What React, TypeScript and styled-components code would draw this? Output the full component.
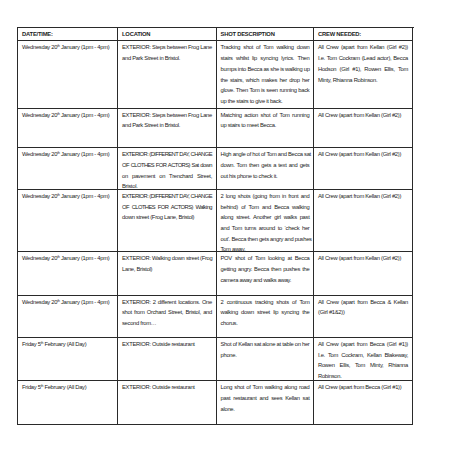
import React from "react";
import styled, { createGlobalStyle } from "styled-components";

const GlobalStyle = createGlobalStyle`
  html, body { margin: 0; padding: 0; background: #ffffff; }
  body {
    font-family: "Liberation Sans", Arial, sans-serif;
    color: #1c1c1c;
  }
`;

const Page = styled.div`
  padding: 27px 0 0 17px;
`;

const Table = styled.div`
  width: 395.5px;
  display: flex;
  flex-direction: column;
  border-top: 1px solid #2a2a2a;
  border-left: 1px solid #2a2a2a;
`;

const Row = styled.div<{ $h: number }>`
  display: grid;
  grid-template-columns: 100px 98.5px 97.5px 98.5px;
  height: ${(p) => p.$h}px;
`;

const Cell = styled.div<{ $head?: boolean }>`
  box-sizing: border-box;
  border-right: 1px solid #2a2a2a;
  border-bottom: 1px solid #2a2a2a;
  padding: 1px 3.5px 0 4px;
  font-size: 5.8px;
  letter-spacing: ${(p) => (p.$head ? "-0.2px" : "-0.28px")};
  line-height: 10.7px;
  font-weight: ${(p) => (p.$head ? 700 : 400)};
  overflow: hidden;
`;

const Line = styled.span<{ $justify: boolean; $tight?: boolean }>`
  display: block;
  white-space: nowrap;
  text-align: ${(p) => (p.$justify ? "justify" : "left")};
  text-align-last: ${(p) => (p.$justify ? "justify" : "left")};
  letter-spacing: ${(p) => (p.$tight ? "-0.56px" : "inherit")};
`;

const Sup = styled.sup`
  font-size: 0.6em;
  line-height: 0;
  vertical-align: 0.6em;
`;

type RowData = {
  h: number;
  date: "wed" | "fri";
  loc: string[];
  shot: string[];
  crew: string[];
};

const rows: RowData[] = [
  {
    h: 67.3,
    date: "wed",
    loc: ["EXTERIOR: Steps between Frog Lane", "and Park Street in Bristol."],
    shot: [
      "Tracking shot of Tom walking down",
      "stairs whilst lip syncing lyrics. Then",
      "bumps into Becca as she is walking up",
      "the stairs, which makes her drop her",
      "glove. Then Tom is seen running back",
      "up the stairs to give it back.",
    ],
    crew: [
      "All Crew (apart from Kellan (Girl #2))",
      "I.e. Tom Cockram (Lead actor), Becca",
      "Hodson (Girl #1), Rowen Ellis, Tom",
      "Minty, Rhianna Robinson.",
    ],
  },
  {
    h: 39.7,
    date: "wed",
    loc: ["EXTERIOR: Steps between Frog Lane", "and Park Street in Bristol."],
    shot: ["Matching action shot of Tom running", "up stairs to meet Becca."],
    crew: ["All Crew (apart from Kellan (Girl #2))"],
  },
  {
    h: 41.6,
    date: "wed",
    loc: [
      "^EXTERIOR: (DIFFERENT DAY, CHANGE",
      "^OF CLOTHES FOR ACTORS) Sat down",
      "on pavement on Trenchard Street,",
      "Bristol.",
    ],
    shot: [
      "High angle of hot of Tom and Becca sat",
      "down. Tom then gets a text and gets",
      "out his phone to check it.",
    ],
    crew: ["All Crew (apart from Kellan (Girl #2))"],
  },
  {
    h: 62.4,
    date: "wed",
    loc: [
      "^EXTERIOR: (DIFFERENT DAY, CHANGE",
      "^OF CLOTHES FOR ACTORS) Walking",
      "down street (Frog Lane, Bristol)",
    ],
    shot: [
      "2 long shots (going from in front and",
      "behind) of Tom and Becca walking",
      "along street. Another girl walks past",
      "and Tom turns around to \u2018check her",
      "out\u2019. Becca then gets angry and pushes",
      "Tom away.",
    ],
    crew: ["All Crew (apart from Kellan (Girl #2))"],
  },
  {
    h: 43.3,
    date: "wed",
    loc: ["EXTERIOR: Walking down street  (Frog", "Lane, Bristol)"],
    shot: [
      "POV shot of Tom looking at Becca",
      "getting angry. Becca then pushes the",
      "camera away and walks away.",
    ],
    crew: ["All Crew (apart from Kellan (Girl #2))"],
  },
  {
    h: 42.3,
    date: "wed",
    loc: [
      "EXTERIOR: 2 different locations. One",
      "shot from Orchard Street, Bristol, and",
      "second from\u2026",
    ],
    shot: [
      "2 continuous tracking shots of Tom",
      "walking down street lip syncing the",
      "chorus.",
    ],
    crew: ["All Crew (apart from Becca & Kellan", "(Girl #1&2))"],
  },
  {
    h: 43.4,
    date: "fri",
    loc: ["EXTERIOR: Outside restaurant"],
    shot: ["Shot of Kellan sat alone at table on her", "phone."],
    crew: [
      "All Crew (apart from Becca (Girl #1))",
      "I.e. Tom Cockram, Kellan Blakeway,",
      "Rowen Ellis, Tom Minty, Rhianna",
      "Robinson.",
    ],
  },
  {
    h: 43.3,
    date: "fri",
    loc: ["EXTERIOR: Outside restaurant"],
    shot: [
      "Long shot of Tom walking along road",
      "past restaurant and sees Kellan sat",
      "alone.",
    ],
    crew: ["All Crew (apart from Becca (Girl #1))"],
  },
];

const Lines: React.FC<{ lines: string[] }> = ({ lines }) => (
  <>
    {lines.map((l, i) => {
      const tight = l.startsWith("^");
      return (
        <Line key={i} $justify={i < lines.length - 1} $tight={tight}>
          {tight ? l.slice(1) : l}
        </Line>
      );
    })}
  </>
);

const DateText: React.FC<{ kind: "wed" | "fri" }> = ({ kind }) =>
  kind === "wed" ? (
    <Line $justify={false}>
      Wednesday 20<Sup>th</Sup> January (1pm - 4pm)
    </Line>
  ) : (
    <Line $justify={false}>
      Friday 5<Sup>th</Sup> February (All Day)
    </Line>
  );

export default function App() {
  return (
    <>
      <GlobalStyle />
      <Page>
        <Table>
          <Row $h={13.4}>
            <Cell $head>DATE/TIME:</Cell>
            <Cell $head>LOCATION</Cell>
            <Cell $head>SHOT DESCRIPTION</Cell>
            <Cell $head>CREW NEEDED:</Cell>
          </Row>
          {rows.map((r, i) => (
            <Row key={i} $h={r.h}>
              <Cell>
                <DateText kind={r.date} />
              </Cell>
              <Cell>
                <Lines lines={r.loc} />
              </Cell>
              <Cell>
                <Lines lines={r.shot} />
              </Cell>
              <Cell>
                <Lines lines={r.crew} />
              </Cell>
            </Row>
          ))}
        </Table>
      </Page>
    </>
  );
}
